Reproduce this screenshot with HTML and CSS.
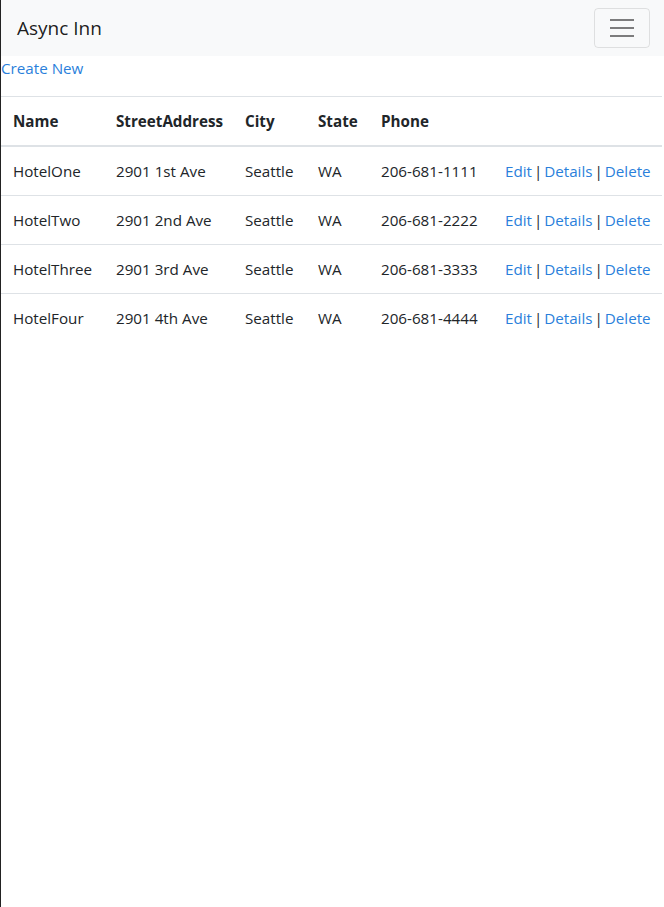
FILE: index.html
```html
<!DOCTYPE html>
<html lang="en">
<head>
<meta charset="utf-8">
<title>Index - Async Inn</title>
<link rel="stylesheet" href="styles.css">
</head>
<body>
<header class="navbar">
  <a class="brand" href="#">Async Inn</a>
  <button class="toggler" type="button" aria-label="Toggle navigation">
    <span class="bar"></span><span class="bar"></span><span class="bar"></span>
  </button>
</header>
<main class="content">
  <p class="create"><a href="#">Create New</a></p>
  <table class="table">
    <colgroup>
      <col class="c-name"><col class="c-street"><col class="c-city"><col class="c-state"><col class="c-phone"><col>
    </colgroup>
    <thead>
      <tr><th>Name</th><th>StreetAddress</th><th>City</th><th>State</th><th>Phone</th><th></th></tr>
    </thead>
    <tbody>
      <tr><td>HotelOne</td><td>2901 1st Ave</td><td>Seattle</td><td>WA</td><td>206-681-1111</td><td class="actions"><a href="#">Edit</a> | <a href="#">Details</a> | <a href="#">Delete</a></td></tr>
      <tr><td>HotelTwo</td><td>2901 2nd Ave</td><td>Seattle</td><td>WA</td><td>206-681-2222</td><td class="actions"><a href="#">Edit</a> | <a href="#">Details</a> | <a href="#">Delete</a></td></tr>
      <tr><td>HotelThree</td><td>2901 3rd Ave</td><td>Seattle</td><td>WA</td><td>206-681-3333</td><td class="actions"><a href="#">Edit</a> | <a href="#">Details</a> | <a href="#">Delete</a></td></tr>
      <tr><td>HotelFour</td><td>2901 4th Ave</td><td>Seattle</td><td>WA</td><td>206-681-4444</td><td class="actions"><a href="#">Edit</a> | <a href="#">Details</a> | <a href="#">Delete</a></td></tr>
    </tbody>
  </table>
</main>
</body>
</html>
```
FILE: styles.css
```css
html, body {
  margin: 0;
  padding: 0;
}
body {
  font-family: "Open Sans", "Noto Sans", "Liberation Sans", sans-serif;
  font-size: 15.2px;
  line-height: 24px;
  color: #212529;
  background: #fff;
  border-left: 1px solid #222;
  min-height: 907px;
  box-sizing: border-box;
}
a {
  color: #2a7fdb;
  text-decoration: none;
}
.navbar {
  height: 56px;
  background: #f8f9fa;
  display: flex;
  align-items: center;
  justify-content: space-between;
  padding: 0 14px 0 16px;
  box-sizing: border-box;
}
.brand {
  font-size: 19px;
  color: rgba(0, 0, 0, 0.9);
  line-height: 30px;
}
.toggler {
  width: 56px;
  height: 40px;
  border: 1px solid rgba(0, 0, 0, 0.1);
  border-radius: 4px;
  background: transparent;
  display: flex;
  flex-direction: column;
  align-items: center;
  justify-content: center;
  gap: 6px;
  padding: 0;
}
.bar {
  display: block;
  width: 24px;
  height: 2px;
  background: rgba(0, 0, 0, 0.5);
}
.content {
  padding: 0;
}
.create {
  margin: 0 0 16px 0;
}
.table {
  width: 661px;
  table-layout: fixed;
  border-collapse: collapse;
}
.c-name { width: 103px; }
.c-street { width: 129px; }
.c-city { width: 73px; }
.c-state { width: 63px; }
.c-phone { width: 124px; }
.table th,
.table td {
  padding: 12px;
  text-align: left;
  vertical-align: top;
  border-top: 1px solid #dee2e6;
  white-space: nowrap;
}
.table th {
  font-weight: 700;
}
.table thead th {
  border-bottom: 2px solid #dee2e6;
}
.table td.actions {
  word-spacing: -2px;
  color: #212529;
}
```
